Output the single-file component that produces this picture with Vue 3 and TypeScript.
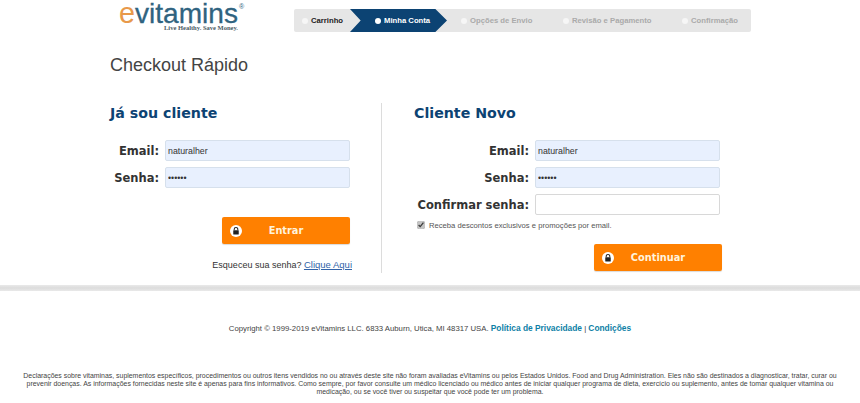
<script setup lang="ts">
interface Step {
  label: string
  state: 'done' | 'active' | 'todo'
}

const steps: Step[] = [
  { label: 'Carrinho', state: 'done' },
  { label: 'Minha Conta', state: 'active' },
  { label: 'Opções de Envio', state: 'todo' },
  { label: 'Revisão e Pagamento', state: 'todo' },
  { label: 'Confirmação', state: 'todo' },
]
</script>

<template>
  <div class="page">
    <header class="top">
      <svg class="logo" viewBox="0 0 175 36" width="175" height="36">
        <text x="0" y="23" class="logo-e" textLength="16" lengthAdjust="spacingAndGlyphs">e</text>
        <text x="16" y="23" class="logo-word" textLength="103" lengthAdjust="spacingAndGlyphs">vitamins</text>
        <text x="120" y="9" class="logo-reg">®</text>
        <text x="45" y="30" class="logo-tag" textLength="74" lengthAdjust="spacingAndGlyphs">Live Healthy. Save Money.</text>
      </svg>
      <ol class="steps">
        <li v-for="s in steps" :key="s.label" class="step" :class="s.state">
          <i class="dot"></i>{{ s.label }}
        </li>
      </ol>
    </header>

    <h1 class="title">Checkout Rápido</h1>

    <main class="columns">
      <section class="col col-left">
        <h2>Já sou cliente</h2>
        <div class="rows">
          <label class="row"><span>Email:</span><input class="filled" type="text" value="naturalher" /></label>
          <label class="row"><span>Senha:</span><input class="filled" type="password" value="naturs" /></label>
        </div>
        <div class="btn-line btn-login">
          <button class="btn" type="button">
            <svg class="lock" viewBox="0 0 14 14" width="12" height="12">
              <circle cx="7" cy="7" r="7" fill="#fff" />
              <path d="M4.9 6.2V4.9a2.1 2.1 0 0 1 4.2 0v1.3" fill="none" stroke="#222" stroke-width="1.2" />
              <rect x="3.8" y="6" width="6.4" height="5" rx=".6" fill="#222" />
            </svg>
            Entrar
          </button>
        </div>
        <p class="forgot">Esqueceu sua senha? <a href="#">Clique Aqui</a></p>
      </section>

      <section class="col col-right">
        <h2>Cliente Novo</h2>
        <div class="rows">
          <label class="row"><span>Email:</span><input class="filled" type="text" value="naturalher" /></label>
          <label class="row"><span>Senha:</span><input class="filled" type="password" value="naturs" /></label>
          <label class="row"><span>Confirmar senha:</span><input type="password" /></label>
        </div>
        <label class="promo"><input type="checkbox" checked />Receba descontos exclusivos e promoções por email.</label>
        <div class="btn-line btn-continue">
          <button class="btn" type="button">
            <svg class="lock" viewBox="0 0 14 14" width="12" height="12">
              <circle cx="7" cy="7" r="7" fill="#fff" />
              <path d="M4.9 6.2V4.9a2.1 2.1 0 0 1 4.2 0v1.3" fill="none" stroke="#222" stroke-width="1.2" />
              <rect x="3.8" y="6" width="6.4" height="5" rx=".6" fill="#222" />
            </svg>
            Continuar
          </button>
        </div>
      </section>
    </main>

    <div class="band"></div>

    <footer class="foot">
      <p class="copy">
        Copyright © 1999-2019 eVitamins LLC. 6833 Auburn, Utica, MI 48317 USA.
        <a href="#">Política de Privacidade</a> | <a href="#">Condições</a>
      </p>
      <p class="legal">
        Declarações sobre vitaminas, suplementos específicos, procedimentos ou outros itens vendidos no ou através deste site não foram avaliadas eVitamins ou pelos Estados Unidos. Food and Drug Administration. Eles não são destinados a diagnosticar, tratar, curar ou prevenir doenças. As informações fornecidas neste site é apenas para fins informativos. Como sempre, por favor consulte um médico licenciado ou médico antes de iniciar qualquer programa de dieta, exercício ou suplemento, antes de tomar qualquer vitamina ou medicação, ou se você tiver ou suspeitar que você pode ter um problema.
      </p>
    </footer>
  </div>
</template>

<style scoped>
.page {
  width: 860px;
  height: 403px;
  overflow: hidden;
  background: #fff;
  font-family: "Liberation Sans", Arial, sans-serif;
  color: #333;
}

.top {
  display: flex;
  height: 40px;
  padding-left: 119px;
}

.logo {
  flex: none;
  display: block;
}

.logo-word {
  font-size: 28.5px;
  fill: #2f6380;
  stroke: #2f6380;
  stroke-width: 0.3px;
}

.logo-e {
  font-size: 30px;
  fill: #e8994a;
}

.logo-reg {
  font-size: 7px;
  fill: #2f6380;
}

.logo-tag {
  font-family: "Liberation Serif", serif;
  font-size: 6.7px;
  font-weight: 700;
  fill: #4a5a64;
}

.steps {
  display: flex;
  width: 457px;
  height: 23px;
  margin: 9px 0 0;
  padding: 0;
  list-style: none;
  background: #e6e6e6;
  border-radius: 2px;
  font-size: 7.7px;
  font-weight: 700;
  line-height: 23px;
  white-space: nowrap;
}

.step {
  box-sizing: border-box;
  color: #aaa;
  display: flex;
  align-items: center;
}

.step:nth-child(1) { width: 56px; padding-left: 8px; color: #222; }
.step:nth-child(2) { width: 97px; padding-left: 25px; color: #fff; }
.step:nth-child(3) { width: 101px; padding-left: 14px; }
.step:nth-child(4) { width: 119px; padding-left: 15px; }
.step:nth-child(5) { width: 84px; padding-left: 15px; }

.step.active {
  background: #0c4373;
  clip-path: polygon(0 0, 88% 0, 100% 50%, 88% 100%, 0 100%, 11% 50%);
}

.dot {
  width: 6px;
  height: 6px;
  margin-right: 3px;
  border-radius: 50%;
  background: #f6f6f6;
  flex: none;
}

.active .dot { background: #fff; }

.title {
  margin: 13px 0 0 110px;
  font-size: 18px;
  line-height: 24px;
  font-weight: 400;
  color: #444;
}

.columns {
  display: flex;
  margin: 26px 0 0 110px;
  height: 170px;
}

.col { box-sizing: border-box; }

.col-left {
  width: 272px;
  height: 170px;
  border-right: 1px solid #dcdcdc;
}

.col-right {
  width: 340px;
  padding-left: 32px;
}

h2 {
  margin: 1px 0 0;
  font-family: "DejaVu Sans", Verdana, sans-serif;
  font-size: 14.2px;
  line-height: 18px;
  font-weight: 700;
  color: #0c4373;
}

.rows {
  display: flex;
  flex-direction: column;
  gap: 6px;
  margin-top: 18px;
  width: 240px;
}

.col-right .rows { width: 306px; }

.row {
  display: flex;
  justify-content: flex-end;
  align-items: center;
  gap: 6px;
  font-family: "DejaVu Sans", Verdana, sans-serif;
  font-size: 11.5px;
  font-weight: 700;
  white-space: nowrap;
  color: #333;
}

input[type="text"],
input[type="password"] {
  box-sizing: border-box;
  width: 185px;
  height: 21px;
  padding: 0 2px;
  border: 1px solid #d8d8d8;
  border-radius: 2px;
  background: #fff;
  font-family: "Liberation Sans", Arial, sans-serif;
  font-size: 8.8px;
  color: #333;
  outline: none;
}

input.filled {
  background: #e8f0fe;
  border-color: #d6e0ec;
}

.btn-line {
  display: flex;
  justify-content: flex-end;
}

.btn-login {
  width: 240px;
  margin-top: 29px;
}

.btn-continue {
  width: 308px;
  margin-top: 13px;
}

.btn {
  position: relative;
  width: 128px;
  height: 27px;
  padding: 0;
  border: 0;
  border-radius: 2px;
  background: #ff8000;
  color: #fff3dd;
  font-family: "DejaVu Sans", Verdana, sans-serif;
  font-size: 9.8px;
  font-weight: 700;
  box-shadow: 0 1px 1px rgba(0, 0, 0, 0.15);
}

.lock {
  position: absolute;
  left: 8px;
  top: 8px;
}

.forgot {
  width: 242px;
  margin: 15px 0 0;
  text-align: right;
  font-size: 9px;
  line-height: 12px;
  color: #333;
}

.forgot a {
  font-size: 9.5px;
  color: #3263a8;
}

.promo {
  display: flex;
  align-items: center;
  margin: 4px 0 0 3px;
  height: 12px;
  font-size: 7.65px;
  color: #555;
}

.promo input {
  width: 8px;
  height: 8px;
  margin: 0 4px 0 0;
  accent-color: #c4c4c4;
}

.band {
  height: 6px;
  margin-top: 12px;
  background: linear-gradient(#e9e9e9, #dcdcdc 50%, #e9e9e9);
}

.foot {
  text-align: center;
}

.copy {
  margin: 31px 0 0;
  font-size: 7.75px;
  line-height: 12px;
  color: #444;
}

.copy a {
  font-size: 8.4px;
  color: #0e7fa6;
  font-weight: 700;
  text-decoration: none;
}

.legal {
  width: 830px;
  margin: 37px auto 0;
  font-size: 6.93px;
  line-height: 8px;
  color: #444;
}
</style>

<style>
html, body {
  margin: 0;
  background: #fff;
}
</style>
